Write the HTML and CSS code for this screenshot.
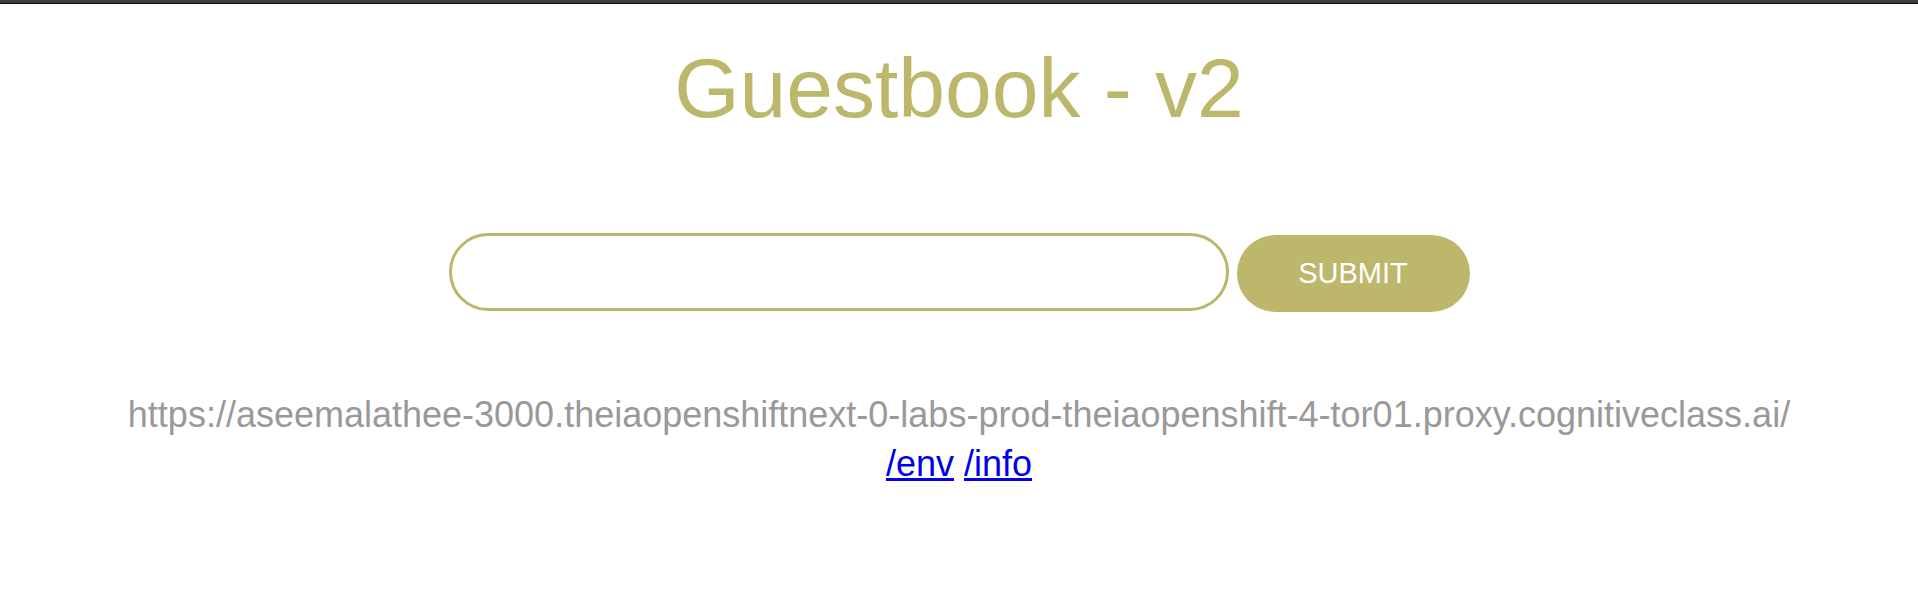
FILE: index.html
```html
<!DOCTYPE html>
<html lang="en">
<head>
<meta charset="utf-8">
<title>Guestbook - v2</title>
<link rel="stylesheet" href="styles.css">
</head>
<body>
  <div class="topbar"></div>
  <div class="header">
    <h1 class="title">Guestbook - v2</h1>
  </div>
  <div class="form-wrap">
    <form class="guestbook-form">
      <input class="entry-input" autocomplete="off" type="text">
      <a class="submit-btn" href="#">Submit</a>
    </form>
  </div>
  <div class="footer">
    <h2 class="host-address">https://aseemalathee-3000.theiaopenshiftnext-0-labs-prod-theiaopenshift-4-tor01.proxy.cognitiveclass.ai/</h2>
    <p class="links"><a href="env">/env</a> <a href="info">/info</a></p>
  </div>
</body>
</html>
```

FILE: styles.css
```css
html, body {
  margin: 0;
  padding: 0;
  background: #ffffff;
}

body {
  font-family: "Liberation Sans", Arial, sans-serif;
  color: #112233;
}

.topbar {
  height: 3px;
  background: #3d3d3d;
  border-bottom: 1px solid #0e0e0e;
}

.header {
  padding-top: 36px;
  text-align: center;
}

.title {
  margin: 0;
  font-size: 84px;
  line-height: 96px;
  font-weight: 400;
  color: #bdb76b;
}

.form-wrap {
  padding-top: 97px;
}

.guestbook-form {
  display: flex;
  justify-content: center;
  align-items: flex-start;
  gap: 8px;
  margin: 0;
}

.entry-input {
  box-sizing: border-box;
  width: 780px;
  height: 78px;
  margin: 0;
  padding: 0 40px;
  border: 3px solid #bdb76b;
  border-radius: 1000px;
  outline: none;
  background: #ffffff;
  font-family: "Liberation Sans", Arial, sans-serif;
  font-size: 36px;
  color: #112233;
}

.submit-btn {
  box-sizing: border-box;
  display: inline-flex;
  align-items: center;
  justify-content: center;
  width: 233px;
  height: 77px;
  margin-top: 2px;
  background: #bdb76b;
  border-radius: 1000px;
  color: #ffffff;
  font-size: 29px;
  font-weight: 400;
  text-decoration: none;
  text-transform: uppercase;
}

.footer {
  padding-top: 82px;
  text-align: center;
}

.host-address {
  margin: 0;
  font-size: 36px;
  line-height: 41px;
  font-weight: 400;
  color: #999999;
  white-space: nowrap;
}

.links {
  margin: 0;
  font-size: 36px;
  line-height: 57px;
}

.links a {
  color: #0000ee;
  text-decoration: underline;
}
```
